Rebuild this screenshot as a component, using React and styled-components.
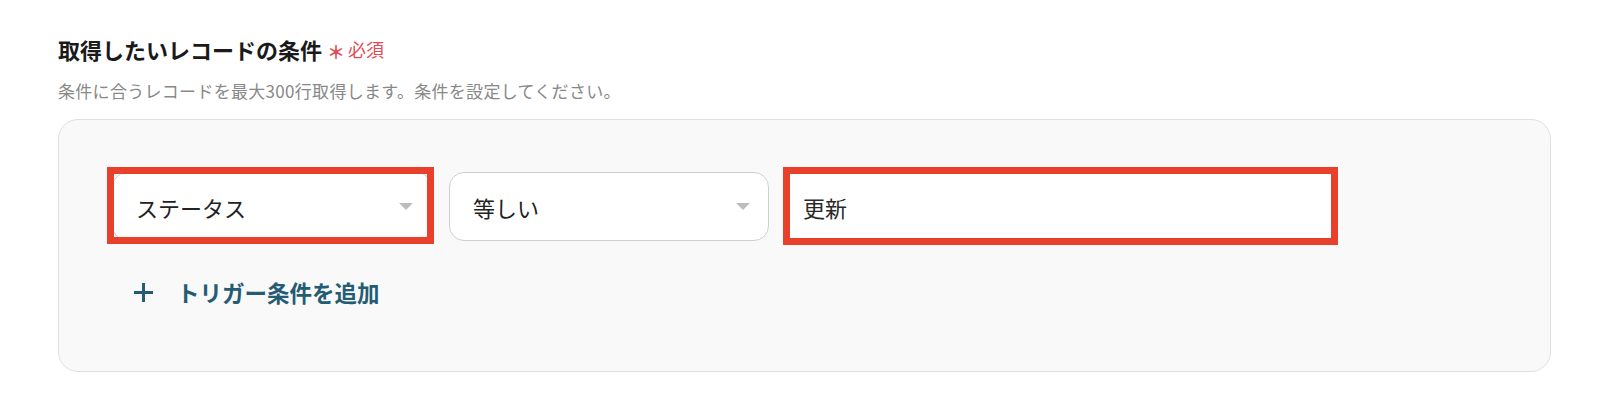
import React from "react";
import styled, { createGlobalStyle } from "styled-components";

const GlobalStyle = createGlobalStyle`
  html, body {
    margin: 0;
    padding: 0;
    background: #ffffff;
  }
  body {
    font-family: "Noto Sans CJK JP", "Noto Sans", sans-serif;
    color: #1a1a1a;
  }
`;

const Section = styled.section`
  padding: 33px 49px 0 58px;
`;

const Title = styled.h2`
  margin: 0;
  display: flex;
  align-items: center;
  font-size: 22px;
  line-height: 33px;
  font-weight: 700;
  color: #1a1a1a;
`;

const Required = styled.span`
  display: inline-flex;
  align-items: center;
  margin-left: 5px;
  color: #e24c55;
  font-size: 18px;
  font-weight: 400;
`;

const Star = styled.span`
  font-size: 18px;
  font-weight: 700;
  margin-right: 3px;
  position: relative;
  top: 2px;
`;

const Hint = styled.p`
  margin: 12px 0 0;
  font-size: 17px;
  letter-spacing: 0.3px;
  line-height: 26px;
  color: #888888;
`;

const Panel = styled.div`
  margin-top: 15px;
  box-sizing: border-box;
  height: 253px;
  background: #f9f9f9;
  border: 1px solid #dfe0e4;
  border-radius: 20px;
  padding: 52px 0 0 53px;
`;

const ConditionRow = styled.div`
  display: flex;
  align-items: center;
  gap: 17px;
`;

const Marked = styled.div`
  position: relative;
  &::after {
    content: "";
    position: absolute;
    top: ${(p) => p.$top}px;
    right: ${(p) => p.$right}px;
    bottom: ${(p) => p.$bottom}px;
    left: ${(p) => p.$left}px;
    border: 7px solid #e8402a;
    pointer-events: none;
  }
`;

const SelectBox = styled.div`
  box-sizing: border-box;
  width: 320px;
  height: 69px;
  display: flex;
  align-items: center;
  justify-content: space-between;
  padding: 0 18px 0 23px;
  background: #ffffff;
  border: 1.5px solid #cfcfcf;
  border-radius: 15px;
  font-size: 22px;
  color: #222222;
`;

const ValueInput = styled.div`
  box-sizing: border-box;
  width: 552px;
  height: 69px;
  display: flex;
  align-items: center;
  padding: 0 16px;
  background: #ffffff;
  border: 1.5px solid #cfcfcf;
  border-radius: 8px;
  font-size: 22px;
  color: #2a2a2a;
`;

const AddButton = styled.button`
  margin-top: 35px;
  display: flex;
  align-items: center;
  gap: 23px;
  padding: 0 0 0 21px;
  border: none;
  background: transparent;
  font-family: inherit;
  font-size: 22.5px;
  line-height: 32px;
  font-weight: 700;
  color: #245c74;
  cursor: pointer;
`;

const Caret = () => (
  <svg width="14" height="7" viewBox="0 0 14 7">
    <path d="M0 0 H14 L7 7 Z" fill="#bdbdbd" />
  </svg>
);

const Plus = () => (
  <svg width="21" height="21" viewBox="0 0 21 21">
    <path d="M10.5 1 V20 M1 10.5 H20" stroke="#245c74" strokeWidth="3" />
  </svg>
);

export default function App() {
  return (
    <>
      <GlobalStyle />
      <Section>
        <Title>
          取得したいレコードの条件
          <Required>
            <Star>＊</Star>必須
          </Required>
        </Title>
        <Hint>条件に合うレコードを最大300行取得します。条件を設定してください。</Hint>
        <Panel>
          <ConditionRow>
            <Marked $top={-5} $right={-2} $bottom={-3} $left={-5}>
              <SelectBox>
                ステータス
                <Caret />
              </SelectBox>
            </Marked>
            <SelectBox>
              等しい
              <Caret />
            </SelectBox>
            <Marked $top={-5} $right={0} $bottom={-4} $left={-3}>
              <ValueInput>更新</ValueInput>
            </Marked>
          </ConditionRow>
          <AddButton>
            <Plus />
            トリガー条件を追加
          </AddButton>
        </Panel>
      </Section>
    </>
  );
}
